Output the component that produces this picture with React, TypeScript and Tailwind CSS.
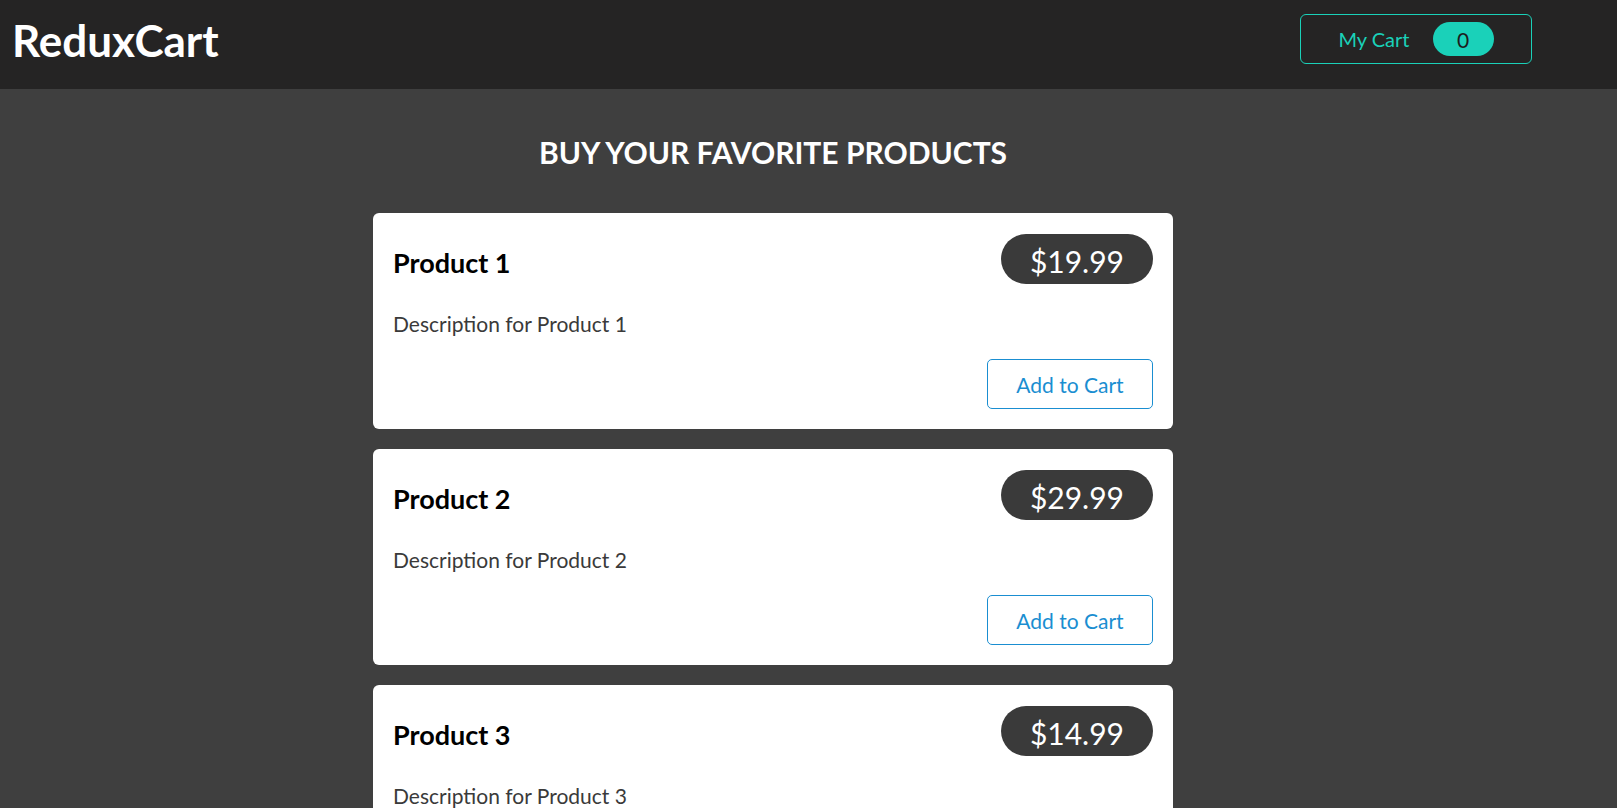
import React from "react";

const products = [
  { id: 1, title: "Product 1", price: "$19.99", description: "Description for Product 1" },
  { id: 2, title: "Product 2", price: "$29.99", description: "Description for Product 2" },
  { id: 3, title: "Product 3", price: "$14.99", description: "Description for Product 3" },
];

function ProductCard({ title, price, description }: { title: string; price: string; description: string }) {
  return (
    <li className="bg-white rounded-[6px] px-5 pt-[21px] pb-[20px]">
      <div className="h-[50px] flex items-center justify-between">
        <h3 className="text-[27px] font-bold text-black leading-none mt-[6px]">{title}</h3>
        <div className="h-[50px] rounded-full bg-[#3a3a3a] text-white text-[30px] px-[29px] flex items-center leading-none">
          <span className="mt-[4px]">{price}</span>
        </div>
      </div>
      <p className="mt-[29px] text-[21px] leading-none text-[#3a3a3a]">{description}</p>
      <div className="mt-[25px] flex justify-end">
        <button className="h-[50px] w-[166px] border border-[#1a8ed1] text-[#1a8ed1] rounded-[5px] text-[21px] leading-none bg-transparent">
          Add to Cart
        </button>
      </div>
    </li>
  );
}

export default function App() {
  return (
    <div className="min-h-screen bg-[#3f3f3f] font-['Lato',sans-serif]">
      <header className="h-[89px] bg-[#252424] flex items-start justify-between pl-[12px] pr-[85px]">
        <h1 className="text-[44px] font-bold text-white leading-none mt-[18px]">ReduxCart</h1>
        <button className="mt-[14px] h-[50px] w-[232px] border border-[#1ad1b9] rounded-[6px] flex items-center justify-center text-[#1ad1b9] text-[20px] leading-none bg-transparent">
          <span className="mr-[2px]">My Cart</span>
          <span className="ml-[21px] w-[61px] h-[34px] rounded-full bg-[#1ad1b9] text-[#1d1d1d] text-[21px] flex items-center justify-center">0</span>
        </button>
      </header>
      <main className="pl-[373px] pt-[48px] pb-10">
        <h2 className="w-[800px] text-center text-white font-bold text-[30px] leading-none">BUY YOUR FAVORITE PRODUCTS</h2>
        <ul className="w-[800px] mt-[46px] flex flex-col gap-5">
          {products.map((p) => (
            <ProductCard key={p.id} title={p.title} price={p.price} description={p.description} />
          ))}
        </ul>
      </main>
    </div>
  );
}
